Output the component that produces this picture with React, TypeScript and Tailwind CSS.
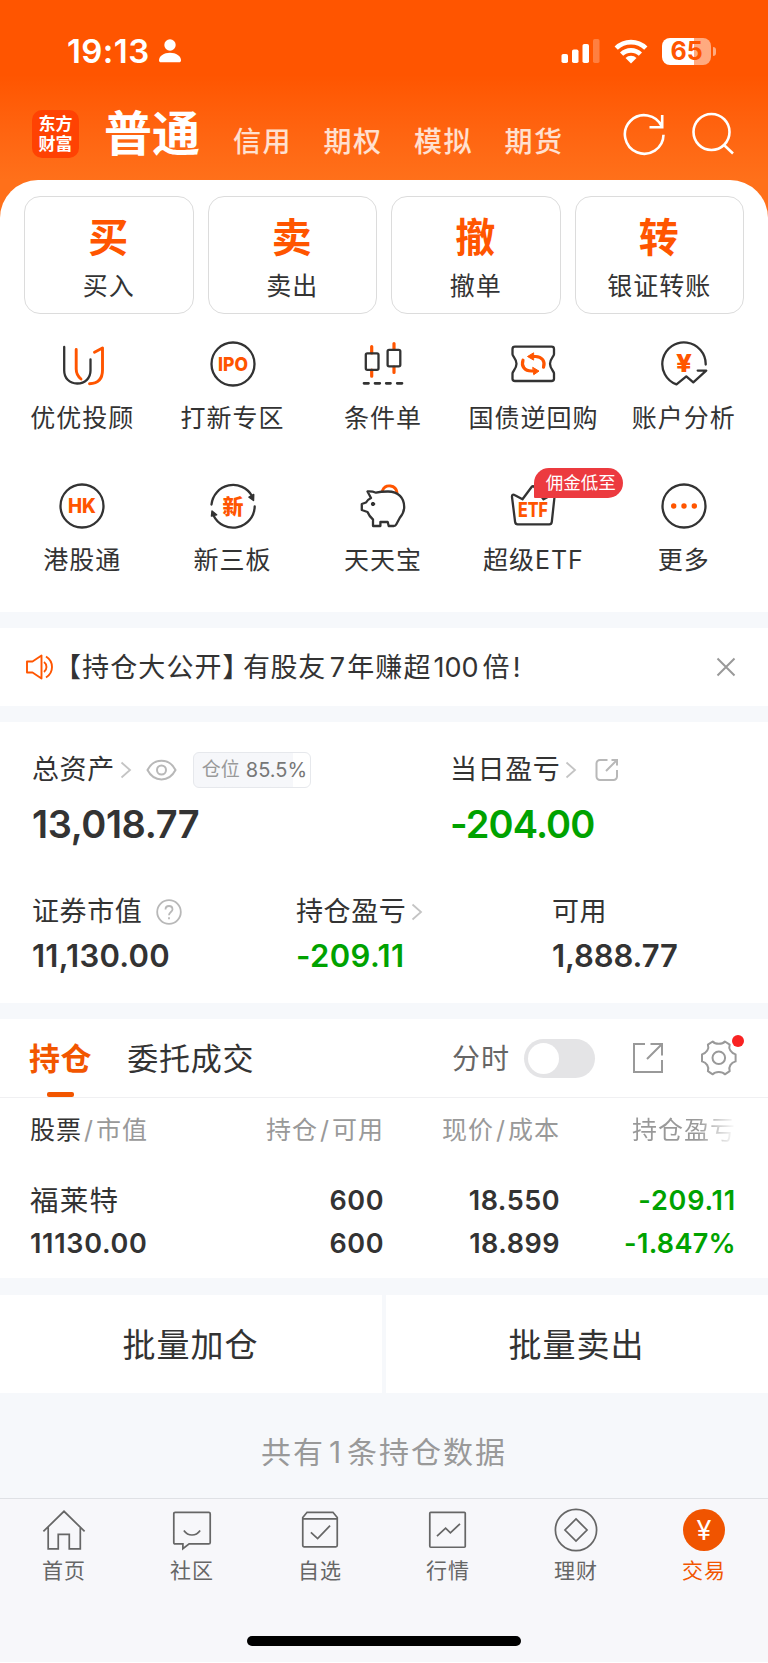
import type { ReactNode } from 'react';
import clsx from 'clsx';

const DARK = '#333333';
const ORANGE = '#ff5500';

interface IconProps {
  children: ReactNode;
  size?: number;
  className?: string;
}

function Icon({ children, size = 48, className }: IconProps) {
  return (
    <svg
      width={size}
      height={size}
      viewBox="0 0 48 48"
      fill="none"
      stroke={DARK}
      strokeWidth={2.3}
      strokeLinecap="round"
      strokeLinejoin="round"
      className={clsx('shrink-0', className)}
    >
      {children}
    </svg>
  );
}

interface IconTextProps {
  children: string;
  y: number;
  size: number;
  length?: number;
  weight?: number;
}

function IconText({ children, y, size, length, weight = 800 }: IconTextProps) {
  return (
    <text
      x={24}
      y={y}
      fontSize={size}
      fontWeight={weight}
      fill={ORANGE}
      stroke="none"
      textAnchor="middle"
      textLength={length}
      lengthAdjust="spacingAndGlyphs"
    >
      {children}
    </text>
  );
}

function Chevron({ className }: { className?: string }) {
  return (
    <svg width="12" height="18" viewBox="0 0 12 18" fill="none" stroke="#c4c4c4" strokeWidth="1.8" className={className}>
      <path d="M1.5 1.5 10 9l-8.5 7.5" />
    </svg>
  );
}

const accountTabs = ['信用', '期权', '模拟', '期货'];

const actions = [
  { mark: '买', label: '买入' },
  { mark: '卖', label: '卖出' },
  { mark: '撤', label: '撤单' },
  { mark: '转', label: '银证转账' },
];

const shortcuts: { label: ReactNode; key: string; badge?: string; icon: ReactNode }[] = [
  {
    key: 'advisor',
    label: '优优投顾',
    icon: (
      <Icon>
        <path d="M6.2 7v23.500c0 7.500 5 13 13 13s13.300-5.500 13.300-13V19.500" />
        <path
          d="M18.200 9.500v19.500c0 4.500 1.800 7.500 4.800 10M36.500 12.300l8-4.300v22c0 8.500-4.500 13.500-13 13.700"
          stroke={ORANGE}
          strokeWidth={2.9}
        />
      </Icon>
    ),
  },
  {
    key: 'ipo',
    label: '打新专区',
    icon: (
      <Icon>
        <circle cx="24" cy="24" r="21.5" />
        <IconText y={30.7} size={19} length={30}>IPO</IconText>
      </Icon>
    ),
  },
  {
    key: 'condition',
    label: '条件单',
    icon: (
      <Icon>
        <path d="M12.700 6.500V13M12.700 30v6.200M35 3.500V9.500M35 27v5.500" stroke={ORANGE} strokeWidth={3.2} />
        <rect x="6.800" y="13.300" width="12.700" height="16.500" rx="1.500" />
        <rect x="28.600" y="9.800" width="12.700" height="16.500" rx="1.500" />
        <path d="M5 43.300h4.500M16 43.300h4.800M27.200 43.300h4.300M38.200 43.300h4.800" strokeWidth={2.7} />
      </Icon>
    ),
  },
  {
    key: 'repo',
    label: '国债逆回购',
    icon: (
      <Icon>
        <path d="M6 6.600h36.500c1.500 0 2.500 1 2.500 2.300v5.300c0 2.300-4 4.500-4 9.600s4 7.300 4 9.600v5.300c0 1.500-1 2.300-2.500 2.300H6c-1.500 0-2.500-1-2.500-2.300v-5.300c0-2.300 4-4.500 4-9.600s-4-7.300-4-9.600V8.900c0-1.500 1-2.300 2.500-2.300Z" />
        <path
          d="M14 20.200c-2 5.800 1.500 10.800 8.500 10.800h1M34.500 27.200c2-5.800-1.500-10.700-8-10.700h-2"
          stroke={ORANGE}
          strokeWidth={3.2}
        />
        <path d="m24 27.500 6 3.600-5 3.400ZM24.300 13 18.500 16.500l5.800 3.400Z" fill={ORANGE} stroke={ORANGE} strokeWidth={1} />
      </Icon>
    ),
  },
  {
    key: 'analysis',
    label: '账户分析',
    icon: (
      <Icon>
        <path d="M45.700 24.500A21.700 21.700 0 1 0 16.500 44.400l9.800-8 7 6L46.200 30.600h-8.500" />
        <IconText y={32} size={25} length={16} weight={800}>¥</IconText>
      </Icon>
    ),
  },
  {
    key: 'hk',
    label: '港股通',
    icon: (
      <Icon>
        <circle cx="24" cy="24" r="21.5" />
        <IconText y={31} size={19.5} length={28} weight={800}>HK</IconText>
      </Icon>
    ),
  },
  {
    key: 'neeq',
    label: '新三板',
    icon: (
      <Icon>
        <path d="M2.500 22.500A21.700 21.700 0 0 1 43 14M45.700 24.500A21.700 21.700 0 0 1 4.500 33.500" />
        <path d="m44.700 12.500-.2 6-4.500-3.300ZM3 29l4.600 3.800L2.500 34Z" fill={DARK} strokeWidth={1.5} />
        <IconText y={31.6} size={21} weight={900}>新</IconText>
      </Icon>
    ),
  },
  {
    key: 'piggy',
    label: '天天宝',
    icon: (
      <Icon>
        <path d="M23.500 8.500a7.600 7.600 0 0 1 14.500 2" stroke={ORANGE} strokeWidth={2.9} />
        <path d="M12 16 8.500 9.500c3-.3 6 .2 8.500 1.200 3-.8 7-1.200 12-1.200 10.500 0 16.200 6.500 16.200 15.500 0 5-2 8-4.500 11l-3.500 6.500c-.5 1-1.500 1.500-2.500 1.500h-5l-1-4h-7.300v4h-7.400v-6.500c-2.500-2-4-4-5.500-7.500L2.800 28v-6l4.200-1.500c1-2 3-3.500 5-4.500Z" />
        <circle cx="14" cy="22" r="1.700" fill={DARK} strokeWidth={1} />
      </Icon>
    ),
  },
  {
    key: 'etf',
    label: '超级ETF',
    badge: '佣金低至',
    icon: (
      <Icon>
        <path d="m5.500 13 8 4.300L22.600 5c.8-1 2-1 2.800 0l9.100 12.300 8-4.300c2-1 3.200 0 3 2l-2.700 24.800c-.2 1.700-1 2.500-2.500 2.500H8.700c-1.500 0-2.400-.8-2.600-2.500L3 15c-.2-2 .9-3 2.500-2Z" />
        <IconText y={35} size={20} length={30}>ETF</IconText>
      </Icon>
    ),
  },
  {
    key: 'more',
    label: '更多',
    icon: (
      <Icon>
        <circle cx="24" cy="24" r="21.5" />
        <g fill={ORANGE} stroke="none">
          <circle cx="13.700" cy="24" r="2.700" />
          <circle cx="24" cy="24" r="2.700" />
          <circle cx="34.300" cy="24" r="2.700" />
        </g>
      </Icon>
    ),
  },
];

const tabBar = [
  {
    label: '首页',
    icon: <path d="M2.500 25.500 24 4.500l21.500 21M7.500 21v22.700H18V28.500h11.500v15.200H41V21" />,
  },
  {
    label: '社区',
    icon: (
      <path d="M6.500 5.500h35c1 0 1.500.5 1.500 1.500v30c0 1-.5 1.500-1.500 1.500H21L14.500 43.500v-5H6.500C5.500 38.500 5 38 5 37V7c0-1 .5-1.500 1.500-1.500ZM15.500 24.500c4.500 6.300 12.500 6.300 17 0" />
    ),
  },
  {
    label: '自选',
    icon: (
      <path d="M10.500 5.500h27L42 11v29c0 1-.5 1.500-1.500 1.500h-33C6.500 41.500 6 41 6 40V11ZM6 12.500h36M14.500 26.500l7 6.500L34.500 19.500" />
    ),
  },
  {
    label: '行情',
    icon: (
      <>
        <rect x="5" y="5.500" width="37" height="36.500" rx="1" />
        <path d="m12.500 30.500 9-8.500 5 5L36.500 17.500" />
      </>
    ),
  },
  {
    label: '理财',
    icon: (
      <>
        <circle cx="24" cy="24" r="21.500" />
        <path d="M24 12.500 35.500 24 24 35.500 12.500 24Z" />
      </>
    ),
  },
];

function StatusBar() {
  return (
    <div className="flex h-[100px] items-center pl-[67px] pr-[52px] pt-[2px]">
      <span className="text-[33px] leading-[36px] font-semibold tracking-[0.4px] text-white">19:13</span>
      <svg width="24" height="24" viewBox="0 0 24 24" fill="#fff" className="ml-[8px]">
        <circle cx="12" cy="6" r="5.700" />
        <path d="M1 21.500C1 17 6 13.800 12 13.800s11 3.200 11 7.700c0 1-.8 1.800-2 1.800H3c-1.200 0-2-.8-2-1.800Z" />
      </svg>
      <svg width="39" height="25" viewBox="0 0 39 25" fill="#fff" className="ml-auto">
        <rect x="0.500" y="15" width="6.500" height="9" rx="1.800" />
        <rect x="11" y="10.500" width="6.500" height="13.500" rx="1.800" />
        <rect x="21.500" y="5" width="6.500" height="19" rx="1.800" />
        <rect x="32" y="0" width="6.500" height="24" rx="1.800" opacity="0.250" />
      </svg>
      <svg width="34" height="25" viewBox="0 0 34 25" className="ml-[14px]">
        <g fill="none" stroke="#fff" strokeWidth="4.600">
          <path d="M2.200 9.200a21 21 0 0 1 29.600 0" />
          <path d="M7.600 15.200a13.400 13.400 0 0 1 18.800 0" />
        </g>
        <path d="M17 24.500 11.500 19a7.800 7.800 0 0 1 11 0Z" fill="#fff" />
      </svg>
      <div className="ml-[14px] flex items-center">
        <div className="flex h-[27px] w-[49px] items-center justify-center rounded-[8px] bg-linear-to-r from-white from-65% to-white/50 to-65% text-[25px] leading-none font-bold text-[#ff5500]">
          65
        </div>
        <div className="ml-[2px] h-[9px] w-[3px] rounded-r-full bg-white/50" />
      </div>
    </div>
  );
}

function AccountHeader() {
  return (
    <div className="flex h-[80px] pl-8">
      <div className="mt-[10px] flex h-[48px] w-[47px] flex-col items-center justify-center rounded-[10px] bg-[#ff4203] text-[17px] leading-[20px] font-bold text-white">
        <span>东方</span>
        <span>财富</span>
      </div>
      <div className="ml-[25px] mt-[9px] text-[48px] leading-[50px] font-bold text-white">普通</div>
      <div className="ml-[33px] mt-[24px] flex gap-[31.5px]">
        {accountTabs.map(tab => (
          <span key={tab} className="text-[28px] leading-[36px] font-medium tracking-[1.5px] text-white/80">
            {tab}
          </span>
        ))}
      </div>
      <svg width="44" height="46" viewBox="0 0 44 46" fill="none" stroke="#fff" strokeWidth="2.600" className="ml-[58px] mt-[10px]">
        <path d="M41.500 24.700A19.300 19.300 0 1 1 39.800 16.500" />
        <path d="M40.200 5v12.200H27.500" />
      </svg>
      <svg width="44" height="46" viewBox="0 0 44 46" fill="none" stroke="#fff" strokeWidth="2.600" className="ml-[25px] mt-[11px]">
        <circle cx="20.500" cy="21" r="18" />
        <path d="m33 34 9 8.500" />
      </svg>
    </div>
  );
}

function QuickActions() {
  return (
    <div className="grid grid-cols-4 gap-[14px] px-6">
      {actions.map(({ mark, label }) => (
        <div key={label} className="flex h-[118px] flex-col items-center rounded-[16px] border border-[#dcdcdc]">
          <span className="mt-[20px] mr-[1px] text-[40px] leading-[42px] font-bold text-[#ff5500]">{mark}</span>
          <span className="mt-[12px] text-[25px] leading-[30px] tracking-[1px] text-[#333]">{label}</span>
        </div>
      ))}
    </div>
  );
}

function Shortcuts() {
  return (
    <div className="mt-[26px] grid grid-cols-5 gap-y-[49px] pl-[7px] pr-[9px]">
      {shortcuts.map(({ key, label, badge, icon }) => (
        <div key={key} className="relative flex flex-col items-center">
          {icon}
          <span className="mt-[15px] text-[25px] leading-[30px] tracking-[1px] text-[#333]">{label}</span>
          {badge && (
            <span className="absolute left-[76px] top-[-14px] flex h-[30px] w-[89px] items-center justify-center rounded-[15px] rounded-bl-[1px] bg-[#ec3a3f] pl-[4px] text-[17.5px] text-white">
              {badge}
            </span>
          )}
        </div>
      ))}
    </div>
  );
}

function Notice() {
  return (
    <div className="mt-4 flex h-[78px] items-center bg-white pl-[26px] pr-[32px]">
      <svg width="28" height="26" viewBox="0 0 28 26" fill="none" stroke={ORANGE} strokeWidth="1.900" strokeLinejoin="round">
        <path d="M1 7.500h5.500l9-6v23l-9-6H1Z" />
        <path d="M18 8c3.300 2.500 3.300 7.500 0 10M20 2.500c8 5 8 16 0 21" />
      </svg>
      <div className="flex pt-px text-[27px] leading-[34px] tracking-[1.1px] text-[#333]">
        <span className="w-[189px] whitespace-nowrap">【持仓大公开】</span>
        <span className="tracking-[0.6px]">有股友</span>
        <span className="ml-[4px]">7</span>
        <span className="ml-[1px]">年赚超</span>
        <span className="ml-[2px] tracking-[0px]">100</span>
        <span className="ml-[4px]">倍</span>
        <span className="ml-[2px]">!</span>
      </div>
      <svg width="20" height="20" viewBox="0 0 20 20" stroke="#999" strokeWidth="2" className="ml-auto">
        <path d="m1.500 1.500 17 17M18.500 1.500l-17 17" />
      </svg>
    </div>
  );
}

function Assets() {
  const label = 'text-[27px] leading-[34px] tracking-[0.6px] text-[#333]';
  const value = 'mt-[9px] text-[31px] leading-[36px] font-semibold';
  return (
    <div className="mt-4 h-[281px] bg-white pl-[32px]">
      <div className="flex pt-[30px]">
        <div className="w-[418px]">
          <div className="flex h-[36px] items-center">
            <span className={label}>总资产</span>
            <Chevron className="ml-[5px]" />
            <svg width="31" height="22" viewBox="0 0 31 22" fill="none" stroke="#b8b8b8" strokeWidth="2" className="ml-[14px]">
              <path d="M1.500 11C8-1.500 23-1.500 29.500 11 23 23.500 8 23.500 1.500 11Z" />
              <circle cx="15.500" cy="11" r="4.500" />
            </svg>
            <div className="ml-[16px] flex h-[36px] w-[118px] items-center rounded-[6px] border border-[#e6e8ec] bg-linear-to-r from-[#f6f7fa] from-85% to-white to-85% pl-[8px] whitespace-nowrap">
              <span className="text-[19px] text-[#999]">仓位</span>
              <span className="ml-[6px] text-[20px] text-[#777]">85.5%</span>
            </div>
          </div>
          <div className="mt-[16px] text-[38px] leading-[40px] font-semibold tracking-[-0.4px] text-[#333]">13,018.77</div>
        </div>
        <div>
          <div className="flex h-[36px] items-center">
            <span className={label}>当日盈亏</span>
            <Chevron className="ml-[5px]" />
            <svg width="24" height="24" viewBox="0 0 24 24" fill="none" stroke="#b8b8b8" strokeWidth="2" className="ml-[18px]">
              <path d="M12.500 2H5a3.500 3.500 0 0 0-3.500 3.500v13A3.500 3.500 0 0 0 5 22h13.500a3.500 3.500 0 0 0 3.500-3.500V12M16.500 2H22v5.500M22 2 11 13" />
            </svg>
          </div>
          <div className="mt-[16px] text-[38px] leading-[40px] font-semibold tracking-[-0.9px] text-[#00a200]">-204.00</div>
        </div>
      </div>
      <div className="mt-[51px] flex">
        <div className="w-[264px]">
          <div className="flex h-[34px] items-center">
            <span className={label}>证券市值</span>
            <svg width="26" height="26" viewBox="0 0 26 26" fill="none" stroke="#b8b8b8" strokeWidth="1.800" className="ml-[14px]">
              <circle cx="13" cy="13" r="11.800" />
              <path d="M9.500 10.500c0-4.700 7-4.700 7 0 0 2.500-3.500 2.700-3.500 5.700M13 18.200v2" />
            </svg>
          </div>
          <div className={clsx(value, 'tracking-[0.25px] text-[#333]')}>11,130.00</div>
        </div>
        <div className="w-[256px]">
          <div className="flex h-[34px] items-center">
            <span className={label}>持仓盈亏</span>
            <Chevron className="ml-[5px]" />
          </div>
          <div className={clsx(value, 'tracking-[0.4px] text-[#00a200]')}>-209.11</div>
        </div>
        <div>
          <div className="flex h-[34px] items-center">
            <span className={label}>可用</span>
          </div>
          <div className={clsx(value, 'tracking-[-0.1px] text-[#333]')}>1,888.77</div>
        </div>
      </div>
    </div>
  );
}

function Positions() {
  return (
    <div className="mt-4 h-[259px] bg-white">
      <div className="flex h-[79px] items-center border-b border-[#f0f0f2] pl-[29px] pr-[25px]">
        <div className="flex h-full flex-col items-center text-[#f25600]">
          <span className="mt-[21px] text-[31px] leading-[38px] font-bold tracking-[0.6px]">持仓</span>
          <span className="mt-auto h-[5px] w-[27px] rounded-[2px] bg-[#f25600]" />
        </div>
        <span className="ml-[35px] pt-px text-[31px] leading-[38px] tracking-[0.8px] text-[#333]">委托成交</span>
        <span className="ml-auto pt-px text-[28px] leading-[38px] tracking-[1px] text-[#666]">分时</span>
        <div className="ml-[14px] flex h-[39px] w-[71px] items-center rounded-full bg-[#e4e4e6] pl-[4px]">
          <div className="size-[31px] rounded-full bg-white" />
        </div>
        <svg width="32" height="32" viewBox="0 0 32 32" fill="none" stroke="#999" strokeWidth="2" className="ml-[37px]">
          <path d="M13 2H2v28h28V18M18.500 2H30v11.500M30 2 15 17" />
        </svg>
        <div className="relative ml-[37px] mr-[6px]">
          <svg width="36" height="36" viewBox="0 0 36 36" fill="none" stroke="#999" strokeWidth="2" strokeLinejoin="round">
            <path d="M11.700 1.500c2.500 3 9.700 3 12.200 0l4.800 3.200c-1.500 4 1.300 8.500 5.900 9.700v7c-4.600 1.200-7.400 5.500-5.900 9.700l-4.800 3.200c-2.500-3-9.700-3-12.200 0L6.900 31.100c1.500-4.200-1.300-8.500-5.900-9.700v-7c4.600-1.200 7.400-5.700 5.900-9.700Z" />
            <circle cx="17.800" cy="17.800" r="6.300" />
          </svg>
          <span className="absolute right-[-7px] top-[-5px] size-[12px] rounded-full bg-[#f92222]" />
        </div>
      </div>
      <div className="grid grid-cols-[178px_176px_176px_176px] pl-[30px] pt-[15px] text-right text-[25px] leading-[34px] tracking-[1px] text-[#999]">
        <span className="text-left">
          <span className="text-[#333]">股票</span>
          <span className="mx-[2px]">/</span>市值
        </span>
        <span>
          持仓<span className="mx-[2px]">/</span>可用
        </span>
        <span>
          现价<span className="mx-[2px]">/</span>成本
        </span>
        <span className="bg-linear-to-r from-[#999] from-78% to-white bg-clip-text text-transparent">持仓盈亏</span>
      </div>
      <div className="grid grid-cols-[178px_176px_176px_176px] gap-y-[7px] pl-[30px] pt-[36px] text-right text-[27px] leading-[36px] font-semibold tracking-[0.5px] text-[#333]">
        <span className="text-left text-[28.5px] font-normal tracking-[1.2px]">福莱特</span>
        <span>600</span>
        <span>18.550</span>
        <span className="tracking-[0.8px] text-[#00a200]">-209.11</span>
        <span className="text-left tracking-[0.7px]">11130.00</span>
        <span>600</span>
        <span>18.899</span>
        <span className="tracking-[0.3px] text-[#00a200]">-1.847%</span>
      </div>
    </div>
  );
}

function TabBar() {
  const label = 'mt-[4px] text-[21px] leading-[28px] tracking-[1px]';
  return (
    <div className="flex h-[164px] flex-col border-t border-[#dfe1e5] bg-[#f7f7fa] pt-[8px]">
      <div className="grid grid-cols-6">
        {tabBar.map(tab => (
          <div key={tab.label} className="flex flex-col items-center text-[#666]">
            <svg width="46" height="46" viewBox="0 0 48 48" fill="none" stroke="#666" strokeWidth="1.800">
              {tab.icon}
            </svg>
            <span className={label}>{tab.label}</span>
          </div>
        ))}
        <div className="flex flex-col items-center text-[#f25600]">
          <div className="m-[2px] flex size-[42px] items-center justify-center rounded-full bg-[#f05400] text-[27px] leading-none font-normal text-white">
            ¥
          </div>
          <span className={label}>交易</span>
        </div>
      </div>
      <div className="mx-auto mt-auto mb-[16px] h-[10px] w-[274px] rounded-full bg-black" />
    </div>
  );
}

export default function App() {
  return (
    <div className="h-[1663px] w-[768px] overflow-hidden bg-white font-['Inter','Noto_Sans_CJK_SC',sans-serif]">
      <div className="bg-[#f6f8fb]">
        <div className="bg-linear-to-b from-[#ff5500] from-[75px] to-[#ff701a] to-[180px]">
          <StatusBar />
          <AccountHeader />
          <div className="h-[432px] rounded-t-[38px] bg-white pt-4">
            <QuickActions />
            <Shortcuts />
          </div>
        </div>
        <Notice />
        <Assets />
        <Positions />
        <div className="mt-[17px] grid h-[98px] grid-cols-2 gap-1 text-center text-[33px] leading-[100px] tracking-[1px] text-[#333]">
          <div className="h-[98px] bg-white pr-[1px]">批量加仓</div>
          <div className="h-[98px] bg-white pr-[1px]">批量卖出</div>
        </div>
        <div className="flex h-[105px] items-center justify-center pt-[14px] text-[30px] tracking-[2px] text-[#999]">
          共有<span className="mx-[4px]">1</span>条持仓数据
        </div>
        <TabBar />
      </div>
    </div>
  );
}
